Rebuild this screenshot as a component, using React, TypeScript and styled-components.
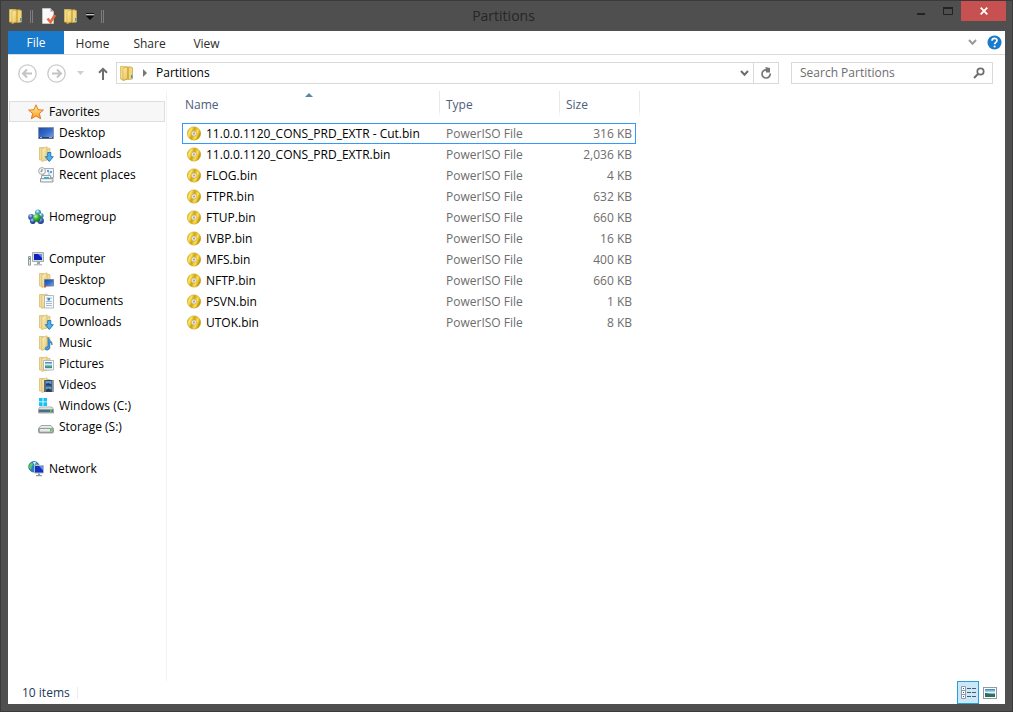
import React, { useState } from "react";
import styled, { createGlobalStyle } from "styled-components";

const font = `"Open Sans", "Noto Sans", sans-serif`;

const GlobalStyle = createGlobalStyle`
  * { box-sizing: border-box; }
  html, body, #root { height: 100%; }
  body { margin: 0; background: #4f4f4f; }
  body, button, input { font-family: ${font}; font-size: 12px; line-height: 20px; color: #000; }
  button { border: 0; padding: 0; background: none; }
  svg { display: block; flex: none; }
`;

const Window = styled.div`
  display: flex;
  flex-direction: column;
  min-height: 100%;
  padding: 0 7px 7px;
  border: 1px solid #3b3a3b;
  background: #4f4f4f;
`;

const TitleBar = styled.header`
  display: grid;
  grid-template-columns: 1fr auto 1fr;
  height: 30px;
`;

const Title = styled.h1`
  margin: 0;
  padding-right: 6px;
  font-size: 14px;
  font-weight: 400;
  line-height: 29px;
  color: #262626;
`;

const QuickAccess = styled.div`
  display: flex;
  align-items: center;
  gap: 6px;
`;

const Grip = styled.span`
  width: 3px;
  height: 13px;
  border: solid #7d7d7d;
  border-width: 0 1px;
`;

const CaptionButtons = styled.div`
  display: flex;
  justify-content: flex-end;
  margin-right: -1px;
`;

const CaptionButton = styled.button<{ $close?: boolean }>`
  display: grid;
  place-items: center;
  width: ${(p) => (p.$close ? 45 : 27)}px;
  height: 20px;
  background: ${(p) => (p.$close ? "#c75050" : "transparent")};
`;

const Client = styled.div`
  display: flex;
  flex: 1;
  flex-direction: column;
  background: #fff;
`;

const Ribbon = styled.nav`
  display: flex;
  height: 24px;
  border-bottom: 1px solid #dadbdc;
`;

const Tab = styled.button<{ $primary?: boolean }>`
  width: ${(p) => (p.$primary ? 56 : 57)}px;
  padding-top: ${(p) => (p.$primary ? 1 : 3)}px;
  color: ${(p) => (p.$primary ? "#fff" : "#2b2b2b")};
  background: ${(p) => (p.$primary ? "#1979ca" : "transparent")};
`;

const RibbonTools = styled.div`
  display: flex;
  align-items: center;
  gap: 10px;
  margin-left: auto;
  padding-right: 3px;
`;

const Toolbar = styled.div`
  display: flex;
  align-items: center;
  height: 36px;
  padding: 0 12px 0 10px;
`;

const History = styled.div`
  display: flex;
  align-items: center;
  gap: 10px;
  margin-right: 7px;
`;

const AddressBar = styled.div`
  display: flex;
  flex: 1;
  align-items: center;
  height: 22px;
  padding-left: 2px;
  border: 1px solid #d9d9d9;
`;

const Crumb = styled.a`
  flex: 1;
  margin-left: 8px;
  color: #000;
  text-decoration: none;
`;

const AddressButton = styled.button<{ $divided?: boolean }>`
  display: grid;
  place-items: center;
  width: ${(p) => (p.$divided ? 25 : 18)}px;
  height: 20px;
  border-left: ${(p) => (p.$divided ? "1px solid #d9d9d9" : "0")};
`;

const SearchBox = styled.label`
  display: flex;
  flex: 0 1 202px;
  align-items: center;
  height: 22px;
  margin-left: 12px;
  padding: 0 7px 0 8px;
  border: 1px solid #d9d9d9;
`;

const SearchInput = styled.input`
  flex: 1;
  min-width: 0;
  height: 20px;
  padding: 0;
  border: 0;
  outline: 0;
  background: none;
  &::placeholder { color: #6d6d6d; opacity: 1; }
`;

const Body = styled.div`
  display: flex;
  flex: 1;
`;

const NavPane = styled.nav`
  width: 159px;
  padding: 10px 1px 0;
  border-right: 1px solid #f3f3f3;
`;

const NavGroup = styled.ul`
  margin: 0 0 21px;
  padding: 0;
  list-style: none;
`;

const NavLink = styled.a<{ $child?: boolean; $selected?: boolean }>`
  display: flex;
  align-items: center;
  gap: 5px;
  height: 21px;
  padding-left: ${(p) => (p.$child ? 28 : 18)}px;
  border: 1px solid ${(p) => (p.$selected ? "#dedede" : "transparent")};
  background: ${(p) => (p.$selected ? "#f7f7f7" : "transparent")};
  color: #000;
  text-decoration: none;
  white-space: nowrap;
`;

const FilePane = styled.main`
  flex: 1;
  padding-left: 15px;
`;

const FileTable = styled.table`
  width: 458px;
  table-layout: fixed;
  border-spacing: 0;
`;

const HeaderCell = styled.th`
  position: relative;
  height: 32px;
  padding: 0 0 5px 6px;
  border-right: 1px solid;
  border-image: linear-gradient(#e4e9f0 60%, #ffffff 80%) 1;
  font-weight: 400;
  text-align: left;
  color: #4c607a;
  &:first-child { padding-left: 3px; }
`;

const SortMark = styled.span`
  position: absolute;
  top: 2px;
  left: calc(50% - 6px);
`;

const FileRow = styled.tr<{ $focused?: boolean }>`
  td {
    height: 21px;
    padding: 0;
    border: 0 solid ${(p) => (p.$focused ? "#3399ff" : "transparent")};
    border-width: 1px 0;
    line-height: 19px;
    color: #6d6d6d;
  }
  td:nth-child(1) { padding-left: 4px; border-left-width: 1px; }
  td:nth-child(2) { padding-left: 6px; }
  td:nth-child(3) { padding-right: 3px; border-right-width: 1px; text-align: right; }
  td:nth-child(4) { border-color: transparent; }
`;

const FileName = styled.span`
  display: flex;
  align-items: center;
  gap: 4px;
  color: #000;
  white-space: nowrap;
`;

const StatusBar = styled.footer`
  display: flex;
  align-items: center;
  height: 23px;
  padding: 0 4px 0 14px;
`;

const StatusText = styled.span`
  padding-right: 7px;
  border-right: 1px solid #ececec;
  line-height: 12px;
  color: #1e395b;
`;

const ViewButtons = styled.div`
  display: flex;
  margin-left: auto;
`;

const ViewButton = styled.button<{ $active?: boolean }>`
  display: grid;
  place-items: center;
  width: 22px;
  height: 23px;
  border: 1px solid ${(p) => (p.$active ? "#26a0da" : "transparent")};
  background: ${(p) => (p.$active ? "#cce8f6" : "transparent")};
`;

/* ---------- icons ---------- */

const HiddenDefs = styled.svg`
  position: absolute;
`;

const Defs = () => (
  <HiddenDefs width="0" height="0" aria-hidden>
    <defs>
      <linearGradient id="front" x1="0" y1="0" x2="1" y2="1">
        <stop offset="0" stopColor="#fdeeae" /><stop offset="1" stopColor="#e6bf50" />
      </linearGradient>
      <linearGradient id="pale" x1="0" y1="0" x2="1" y2="1">
        <stop offset="0" stopColor="#fbf0c2" /><stop offset="1" stopColor="#e6cc7c" />
      </linearGradient>
      <linearGradient id="screen" x1="0" y1="0" x2="1" y2="1">
        <stop offset="0" stopColor="#1c4aa2" /><stop offset=".5" stopColor="#3568c8" /><stop offset="1" stopColor="#76a9ee" />
      </linearGradient>
      <linearGradient id="star" x1="0" y1="0" x2="0" y2="1">
        <stop offset="0" stopColor="#fff3a0" /><stop offset="1" stopColor="#f79a1c" />
      </linearGradient>
      <linearGradient id="gold" x1="0" y1=".1" x2="1" y2=".5">
        <stop offset="0" stopColor="#d8a800" /><stop offset=".25" stopColor="#ffe95e" /><stop offset=".5" stopColor="#d0a20c" />
        <stop offset=".75" stopColor="#ffe44a" /><stop offset="1" stopColor="#b98a00" />
      </linearGradient>
      <linearGradient id="metal" x1="0" y1="0" x2="0" y2="1">
        <stop offset="0" stopColor="#f4f4f4" /><stop offset="1" stopColor="#a9abae" />
      </linearGradient>
      <linearGradient id="photo" x1="0" y1="0" x2="0" y2="1">
        <stop offset="0" stopColor="#2f7fc4" /><stop offset=".45" stopColor="#e2f3fa" /><stop offset=".6" stopColor="#6aa79a" /><stop offset="1" stopColor="#2a8a78" />
      </linearGradient>
      <radialGradient id="green" cx=".35" cy=".3" r=".7">
        <stop offset="0" stopColor="#c9f5b4" /><stop offset=".5" stopColor="#3fb83a" /><stop offset="1" stopColor="#0f7a1c" />
      </radialGradient>
      <radialGradient id="blue" cx=".4" cy=".3" r=".7">
        <stop offset="0" stopColor="#bcd2f6" /><stop offset=".5" stopColor="#3c64bd" /><stop offset="1" stopColor="#1c2f86" />
      </radialGradient>
      <radialGradient id="teal" cx=".4" cy=".3" r=".7">
        <stop offset="0" stopColor="#d8f3f6" /><stop offset=".5" stopColor="#4aa6c0" /><stop offset="1" stopColor="#24728e" />
      </radialGradient>
    </defs>
  </HiddenDefs>
);

const Svg = ({ w = 16, h = 16, children }: { w?: number; h?: number; children: React.ReactNode }) => (
  <svg width={w} height={h} viewBox={`0 0 ${w} ${h}`} aria-hidden>{children}</svg>
);

const Folder = () => (
  <Svg>
    <path d="M1.5 1.500h6v12.500h-6z" fill="#f3dc88" stroke="#dcb856" strokeWidth=".8" />
    <path d="M8 2.500l3-.8 2.500 1v11.300l-4.500.5z" fill="#f0d67a" stroke="#cfa742" strokeWidth=".8" />
    <path d="M4 3.200l5-1.400v12l-5 1.600z" fill="url(#front)" stroke="#d3aa45" strokeWidth=".7" />
    <path d="M9 2v11.800" stroke="#c79d35" strokeWidth="1" />
    <path d="M12 10h1.500v3H12z" fill="#3f9ad6" />
    <path d="M2 14l2 1.400 5-1.400" fill="none" stroke="#bf9838" strokeWidth=".6" />
  </Svg>
);

const PaleFolder = ({ children }: { children?: React.ReactNode }) => (
  <Svg>
    <path d="M1.500 1.500h4v12.500h-4z" fill="#f0dc96" stroke="#d8be6e" strokeWidth=".8" />
    <path d="M8 2l4 .5v11.500H7z" fill="#efda96" stroke="#d3b866" strokeWidth=".7" />
    <path d="M3.800 2.600L9 .8v13l-5.200 1.700z" fill="url(#pale)" stroke="#d3b866" strokeWidth=".7" />
    {children}
  </Svg>
);

const Download = () => (
  <PaleFolder><path d="M9.700 6.500h3.100v4.200h2.500l-4 4.800-4-4.800h2.400z" fill="#4db2ee" stroke="#1b72b8" strokeWidth=".9" /></PaleFolder>
);

const icons: Record<string, () => React.ReactElement> = {
  star: () => (
    <Svg><path d="M8 .8l2.100 4.900 5.300.4-4.100 3.400 1.400 5.300L8 11.900l-4.700 2.900 1.400-5.300L.6 6.100l5.300-.4z" fill="url(#star)" stroke="#e0701a" strokeWidth=".9" /></Svg>
  ),
  desktop: () => (
    <Svg>
      <path d="M.5 2.500h15v11H.5z" fill="url(#screen)" stroke="#8796ad" />
      <path d="M1 12h14v1.500H1z" fill="#2b3c5c" /><path d="M2 12h2v1H2z" fill="#78c8f4" /><path d="M11 12h3v1h-3z" fill="#9aa8bd" />
    </Svg>
  ),
  downloads: Download,
  recent: () => (
    <Svg>
      <path d="M5.500 1.500h10v9h-10z" fill="#f2f3f4" stroke="#a8adb2" />
      <path d="M9 3h2v2H9zM12 4h2v2h-2z" fill="#5ba1dc" /><path d="M10 5h2v3h-2z" fill="#b7d6ef" />
      <path d="M3.500 8.500h9v3h-9z" fill="#eef0f1" stroke="#9ca1a5" /><path d="M2.500 11.500h12.500v3.500H2.500z" fill="#e2e4e6" stroke="#989da2" />
      <path d="M6 10h5v2H6z" fill="#40aeca" /><path d="M4 13.500h9" stroke="#fff" />
      <circle cx="4" cy="4" r="3.400" fill="#f7f8f8" stroke="#a0a5a9" /><path d="M4 2v2.300H2.500" fill="none" stroke="#555" strokeWidth=".8" />
    </Svg>
  ),
  homegroup: () => (
    <Svg>
      <circle cx="10" cy="3.600" r="3" fill="url(#teal)" /><circle cx="3.200" cy="8" r="3" fill="url(#blue)" />
      <circle cx="13" cy="6.500" r="2.600" fill="url(#teal)" /><circle cx="4.800" cy="12" r="2.900" fill="url(#blue)" />
      <circle cx="12.600" cy="11.800" r="3.300" fill="url(#blue)" /><circle cx="8.800" cy="8.800" r="3.900" fill="url(#green)" />
    </Svg>
  ),
  computer: () => (
    <Svg>
      <path d="M4.500 1.500h11v9h-11z" fill="#d7dbe0" stroke="#a3aab2" /><path d="M6 3h8v6H6z" fill="#0d22b8" />
      <path d="M10 3h4v4z" fill="#6e89e8" /><path d="M9 11h3v2H9z" fill="#9da3a9" /><path d="M6 13h8v1.400H6z" fill="#b9bec3" />
      <path d="M.5 5.500h2v8.700h-2z" fill="#e0e3e6" stroke="#7f868c" strokeWidth=".8" /><path d="M1 7h1.200v1.400H1z" fill="#39b44a" />
    </Svg>
  ),
  folderDesktop: () => (
    <PaleFolder><path d="M6.500 7.500h9v6.500h-9z" fill="url(#screen)" stroke="#667b9c" strokeWidth=".8" /><path d="M6 14h2v1.500H6z" fill="#e35b2c" /></PaleFolder>
  ),
  documents: () => (
    <PaleFolder><path d="M6.500 2.500h9v12.500h-9z" fill="#f8fafb" stroke="#a3a9ae" strokeWidth=".8" /><path d="M8 5h6M8 8.500h6M8 10.500h6M8 12.500h6" stroke="#a9bccf" /><path d="M9.500 5h2.600v2.500H9.500z" fill="#3688d4" /></PaleFolder>
  ),
  music: () => (
    <PaleFolder><path d="M10 2.500c.4 2.500 4.800 3.600 4 7.500-.5-1.800-1.400-2.500-2.400-2.800v5.200c0 3-4.400 3.600-4.400 1.300 0-1.600 1.600-2.300 2.800-1.800z" fill="#3aa5ea" stroke="#1d68ac" strokeWidth=".7" /></PaleFolder>
  ),
  pictures: () => (
    <PaleFolder><path d="M5.500 4.500h10v9.500h-10z" fill="#fafbfb" stroke="#a5abb0" strokeWidth=".8" /><path d="M7 6h7v6.200H7z" fill="url(#photo)" /></PaleFolder>
  ),
  videos: () => (
    <PaleFolder><path d="M6 3h9.500v12H6z" fill="#374252" /><path d="M8 4h5.500v4.300H8zM8 9.500h5.500V14H8z" fill="#5e9bd4" /><path d="M8 6.800l2.500-.8 3 1.600v.7H8zM8 12.600l2.500-1.100 3 1.300V14H8z" fill="#203d62" /><path d="M7 3.500v11M14.500 3.500v11" stroke="#dfe4ea" strokeDasharray="1 1" /></PaleFolder>
  ),
  windows: () => (
    <Svg>
      <path d="M1 0h3.600v3.500H1zM5.400 0H9v3.500H5.400zM1 4.300h3.600V8H1zM5.400 4.300H9V8H5.400z" fill="#13c1f4" />
      <path d="M2 9h12l1.500 2.200V15H.5v-3.800z" fill="url(#metal)" stroke="#8b8f93" strokeWidth=".7" /><path d="M1 11.500h14V14H1z" fill="#47707e" /><path d="M12 11.700h1.700v2H12z" fill="#50e03c" />
    </Svg>
  ),
  drive: () => (
    <Svg>
      <path d="M3 6.500h10l2.500 3v3.200c0 .9-.6 1.300-1.300 1.300H1.800c-.8 0-1.300-.5-1.300-1.300V9.500z" fill="url(#metal)" stroke="#8d9195" strokeWidth=".8" />
      <path d="M1.300 9.500h13.400v3.600H1.300z" fill="#e9eaec" stroke="#7b7f83" strokeWidth=".7" /><path d="M12 10h1.700v2.500H12z" fill="#43cf32" />
    </Svg>
  ),
  network: () => (
    <Svg>
      <circle cx="6" cy="5.800" r="5.300" fill="#2383c4" stroke="#1b5f98" strokeWidth=".7" />
      <path d="M1.500 4C3 1.500 4 1.800 5 2.500L4.500 4.500 3.500 6 3 9 1 6.500zM7.500 2l3 1.500.5 2-3 .5z" fill="#5ccd5c" /><path d="M5 1l3-.1L6.500 4.500z" fill="#d6f3ff" />
      <path d="M6.500 4.500h9v7.500h-9z" fill="#1231c4" stroke="#b3bac4" /><path d="M11 5h4v4.500z" fill="#6d8bee" /><path d="M10 12.500h2V14h-2zM8 14h6v1.200H8z" fill="#9299a1" />
    </Svg>
  ),
};

const Disc = () => (
  <Svg w={15} h={15}>
    <circle cx="7" cy="7.500" r="6.600" fill="url(#gold)" stroke="#c09618" strokeWidth=".6" />
    <circle cx="7" cy="7.500" r="2.600" fill="#e6e6f0" stroke="#b8a878" strokeWidth=".6" />
    <circle cx="7" cy="7.500" r="1.100" fill="#c7a440" />
  </Svg>
);

const RoundArrow = ({ flip }: { flip?: boolean }) => (
  <Svg w={19} h={19}>
    <circle cx="9.500" cy="9.500" r="8.700" fill="none" stroke="#c9c9c9" strokeWidth="1.300" />
    <path d={flip ? "M5 9.500h9M10 5.500l4 4-4 4" : "M14 9.500H5M9 5.500l-4 4 4 4"} fill="none" stroke="#c4c4c4" strokeWidth="2" />
  </Svg>
);

const Chevron = ({ color }: { color: string }) => (
  <Svg w={9} h={7}><path d="M1 1l3.500 3.800L8 1" fill="none" stroke={color} strokeWidth="2" /></Svg>
);

/* ---------- data ---------- */

type NavItem = [label: string, icon: string];

const navGroups: NavItem[][] = [
  [["Favorites", "star"], ["Desktop", "desktop"], ["Downloads", "downloads"], ["Recent places", "recent"]],
  [["Homegroup", "homegroup"]],
  [
    ["Computer", "computer"], ["Desktop", "folderDesktop"], ["Documents", "documents"], ["Downloads", "downloads"],
    ["Music", "music"], ["Pictures", "pictures"], ["Videos", "videos"], ["Windows (C:)", "windows"], ["Storage (S:)", "drive"],
  ],
  [["Network", "network"]],
];

const files = [
  ["11.0.0.1120_CONS_PRD_EXTR - Cut.bin", "316 KB"],
  ["11.0.0.1120_CONS_PRD_EXTR.bin", "2,036 KB"],
  ["FLOG.bin", "4 KB"],
  ["FTPR.bin", "632 KB"],
  ["FTUP.bin", "660 KB"],
  ["IVBP.bin", "16 KB"],
  ["MFS.bin", "400 KB"],
  ["NFTP.bin", "660 KB"],
  ["PSVN.bin", "1 KB"],
  ["UTOK.bin", "8 KB"],
];

export default function App() {
  const [query, setQuery] = useState("");
  return (
    <Window>
      <GlobalStyle />
      <Defs />
      <TitleBar>
        <QuickAccess>
          <Folder />
          <Grip />
          <button aria-label="Properties">
            <Svg w={18} h={16}>
              <path d="M3.500.5h8l3 3v12h-11z" fill="#fafafa" stroke="#dadada" strokeWidth=".6" /><path d="M11.500.5v3h3z" fill="#8f8f8f" />
              <path d="M8.500 10.500l3 3.500 4.500-7" fill="none" stroke="#e8693e" strokeWidth="2.600" />
            </Svg>
          </button>
          <button aria-label="New folder"><Folder /></button>
          <button aria-label="Customize Quick Access Toolbar">
            <Svg w={10} h={8}><path d="M1 1h8v1H1z" fill="#111" /><path d="M1 2h8v1H1z" fill="#c4c4c4" /><path d="M1 4h8L5 8z" fill="#0b0b0b" /></Svg>
          </button>
          <Grip />
        </QuickAccess>
        <Title>Partitions</Title>
        <CaptionButtons>
          <CaptionButton aria-label="Minimize"><Svg w={10} h={10}><path d="M1 7h8v2H1z" fill="#222" /></Svg></CaptionButton>
          <CaptionButton aria-label="Maximize"><Svg w={10} h={8}><path d="M.5 1h9v6.500h-9z" fill="none" stroke="#222" /><path d="M0 0h10v2H0z" fill="#222" /></Svg></CaptionButton>
          <CaptionButton $close aria-label="Close"><Svg w={8} h={8}><path d="M.7.7l6.600 6.600M7.300.7L.7 7.300" stroke="#fff" strokeWidth="1.800" /></Svg></CaptionButton>
        </CaptionButtons>
      </TitleBar>
      <Client>
        <Ribbon>
          <Tab $primary>File</Tab>
          <Tab>Home</Tab>
          <Tab>Share</Tab>
          <Tab>View</Tab>
          <RibbonTools>
            <button aria-label="Expand the Ribbon"><Chevron color="#9a9a9a" /></button>
            <button aria-label="Help">
              <Svg w={15} h={15}>
                <circle cx="7.500" cy="7.500" r="7" fill="#1979ca" />
                <path d="M5 5.700c.1-3 5-3 5-.2 0 1.800-2.400 1.900-2.400 3.800" fill="none" stroke="#fff" strokeWidth="1.700" /><circle cx="7.600" cy="11.500" r="1.100" fill="#fff" />
              </Svg>
            </button>
          </RibbonTools>
        </Ribbon>
        <Toolbar>
          <History>
            <button aria-label="Back"><RoundArrow /></button>
            <button aria-label="Forward"><RoundArrow flip /></button>
            <button aria-label="Recent locations"><Svg w={11} h={4}><path d="M1 0h7L4.500 4z" fill="#cfcfcf" /></Svg></button>
            <button aria-label="Up"><Svg w={12} h={13}><path d="M6 13V2M2 5.800l4-4 4 4" fill="none" stroke="#6d6d6d" strokeWidth="2" /></Svg></button>
          </History>
          <AddressBar>
            <Folder />
            <Svg w={13} h={8}><path d="M8 0l4 4-4 4z" fill="#777" /></Svg>
            <Crumb href="#partitions">Partitions</Crumb>
            <AddressButton aria-label="Previous locations"><Chevron color="#6d6d6d" /></AddressButton>
            <AddressButton $divided aria-label="Refresh">
              <Svg w={12} h={12}><path d="M6.500 2.800A4.100 4.100 0 1 0 10.200 6.500" fill="none" stroke="#777" strokeWidth="1.700" /><path d="M5.500 0l4.500 1v4.500H6z" fill="#777" /></Svg>
            </AddressButton>
          </AddressBar>
          <SearchBox>
            <SearchInput aria-label="Search Partitions" placeholder="Search Partitions" value={query} onChange={(e) => setQuery(e.target.value)} />
            <Svg w={12} h={12}><circle cx="7.500" cy="4.500" r="3.200" fill="none" stroke="#6d6d6d" strokeWidth="1.700" /><path d="M5.200 6.800L1 11" stroke="#6d6d6d" strokeWidth="2" /></Svg>
          </SearchBox>
        </Toolbar>
        <Body>
          <NavPane>
            {navGroups.map((group, g) => (
              <NavGroup key={g}>
                {group.map(([label, icon], i) => {
                  const Icon = icons[icon];
                  return (
                    <li key={label}>
                      <NavLink href={`#${icon}`} $child={i > 0} $selected={label === "Favorites"}><Icon />{label}</NavLink>
                    </li>
                  );
                })}
              </NavGroup>
            ))}
          </NavPane>
          <FilePane>
            <FileTable>
              <colgroup><col width="258" /><col width="120" /><col width="76" /><col width="4" /></colgroup>
              <thead>
                <tr>
                  <HeaderCell>Name<SortMark><Svg w={8} h={4}><path d="M0 4l4-4 4 4z" fill="#5588ab" /></Svg></SortMark></HeaderCell>
                  <HeaderCell>Type</HeaderCell>
                  <HeaderCell colSpan={2}>Size</HeaderCell>
                </tr>
              </thead>
              <tbody>
                {files.map(([name, size], i) => (
                  <FileRow key={name} $focused={i === 0}>
                    <td><FileName><Disc />{name}</FileName></td>
                    <td>PowerISO File</td>
                    <td>{size}</td>
                    <td />
                  </FileRow>
                ))}
              </tbody>
            </FileTable>
          </FilePane>
        </Body>
        <StatusBar>
          <StatusText>10 items</StatusText>
          <ViewButtons>
            <ViewButton $active aria-label="Details view">
              <Svg w={15} h={13}>
                <path d="M.5.5h4v12h-4zM.5 4.500h4M.5 8.500h4" fill="#fff" stroke="#8d9aae" /><path d="M2 2h1v1H2z" fill="#2c7a3c" /><path d="M2 6h1v1H2z" fill="#d81e1e" /><path d="M2 10h1v1H2z" fill="#3b52a0" />
                <path d="M6 2.500h4M11 2.500h4M6 6.500h4M11 6.500h4M6 10.500h4M11 10.500h4" stroke="#4a5a70" />
              </Svg>
            </ViewButton>
            <ViewButton aria-label="Large thumbnails view">
              <Svg w={14} h={12}><rect x=".5" y=".5" width="13" height="11" fill="#fff" stroke="#9299a6" /><path d="M2 2h10v8H2z" fill="url(#photo)" /><path d="M2 6c3 0 6 2 10 1v3H2z" fill="#2b6f5c" /></Svg>
            </ViewButton>
          </ViewButtons>
        </StatusBar>
      </Client>
    </Window>
  );
}
